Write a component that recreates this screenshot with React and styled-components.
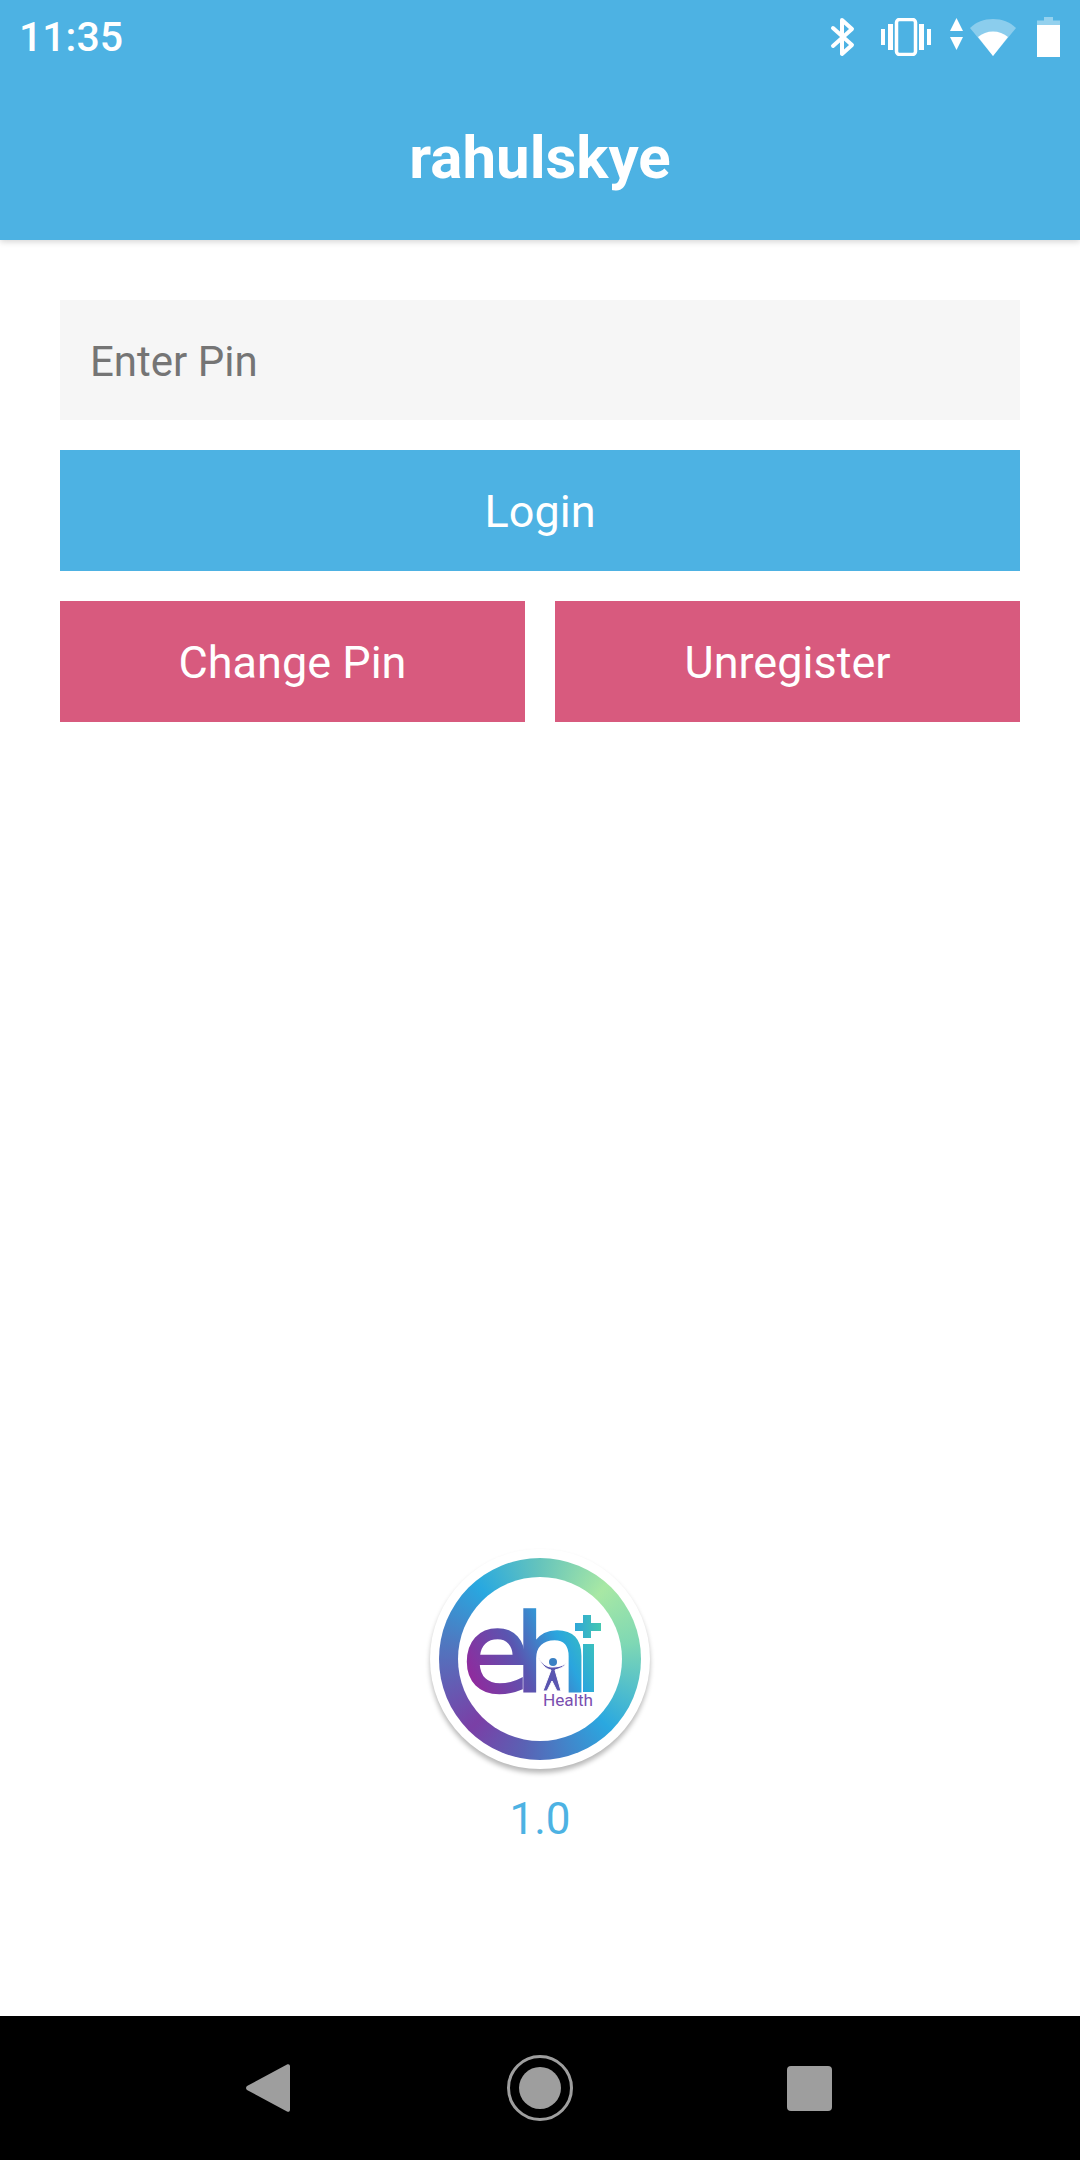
import React from 'react'
import styled, { createGlobalStyle } from 'styled-components'

const Global = createGlobalStyle`
  html, body { margin: 0; padding: 0; background: #fff; }
  * { box-sizing: border-box; }
  body { font-family: Roboto, "Liberation Sans", sans-serif; }
`

const Page = styled.div`
  width: 1080px;
  height: 2160px;
  display: flex;
  flex-direction: column;
  overflow: hidden;
`
const Header = styled.header`
  height: 240px;
  flex: none;
  background: #4db2e3;
  color: #fff;
  box-shadow: 0 2px 6px rgba(0, 0, 0, 0.16);
  display: flex;
  flex-direction: column;
`
const StatusBar = styled.div`
  height: 74px;
  padding: 0 20px 0 19px;
  display: flex;
  align-items: center;
  justify-content: space-between;
`
const Time = styled.span`
  font-size: 41px;
  font-weight: 500;
  line-height: 74px;
`
const StatusIcons = styled.div`
  display: flex;
  align-items: center;
`
const Title = styled.h1`
  margin: 0;
  flex: 1;
  display: flex;
  align-items: center;
  justify-content: center;
  font-size: 60px;
  font-weight: 700;
`
const Main = styled.main`
  flex: 1;
  padding: 60px 60px 0;
  display: flex;
  flex-direction: column;
  gap: 30px;
`
const PinInput = styled.input`
  height: 120px;
  width: 100%;
  border: 0;
  outline: 0;
  padding: 2px 30px 0;
  background: #f6f6f6;
  font: 400 42px Roboto, sans-serif;
  color: #333;
  &::placeholder { color: #757575; opacity: 1; }
`
const Button = styled.button`
  height: 121px;
  width: 100%;
  border: 0;
  padding: 2px 0 0;
  color: #fff;
  background: ${(p) => (p.$danger ? '#d85a7e' : '#4db2e3')};
  font: 400 45px Roboto, sans-serif;
`
const ButtonRow = styled.div`
  display: flex;
  gap: 30px;
`
const LogoBlock = styled.div`
  margin-top: auto;
  padding-bottom: 169px;
  display: flex;
  flex-direction: column;
  align-items: center;
`
const Disc = styled.div`
  width: 220px;
  height: 220px;
  border-radius: 50%;
  background: #fff;
  box-shadow: 0 4px 5px rgba(0, 0, 0, 0.28);
  display: flex;
  align-items: center;
  justify-content: center;
`
const Ring = styled.div`
  width: 202px;
  height: 202px;
  border-radius: 50%;
  background: conic-gradient(
    #66c4bc 0deg,
    #a8e8a4 42deg,
    #7fd8b4 80deg,
    #2aa8e0 135deg,
    #5a62b4 190deg,
    #7a3fa6 225deg,
    #4f78c0 280deg,
    #28a8e0 320deg,
    #66c4bc 360deg
  );
  display: flex;
  align-items: center;
  justify-content: center;
`
const RingHole = styled.div`
  width: 164px;
  height: 164px;
  border-radius: 50%;
  background: #fff;
  display: flex;
`
const Version = styled.div`
  margin-top: 22px;
  font-size: 44px;
  line-height: 56px;
  color: #4db2e3;
`
const NavBar = styled.nav`
  height: 144px;
  flex: none;
  background: #000;
  display: flex;
  align-items: center;
  justify-content: center;
  gap: 214px;
  padding-right: 3px;
  & > svg { margin-right: 3px; }
`
const HomeRing = styled.div`
  width: 66px;
  height: 66px;
  border-radius: 50%;
  border: 3px solid #9e9e9e;
  display: flex;
  align-items: center;
  justify-content: center;
`
const HomeDot = styled.div`
  width: 42px;
  height: 42px;
  border-radius: 50%;
  background: #9e9e9e;
`
const Recent = styled.div`
  width: 45px;
  height: 45px;
  border-radius: 4px;
  background: #9e9e9e;
`

const Bluetooth = () => (
  <svg width="26" height="40" viewBox="0 0 26 40" fill="none" stroke="#fff" strokeWidth="4" strokeLinejoin="round" strokeLinecap="round" style={{ marginRight: 25 }}>
    <path d="M3 11 22 28 12 37V3L22 12 3 29" />
  </svg>
)
const Vibrate = () => (
  <svg width="50" height="38" viewBox="0 0 50 38" fill="#fff" style={{ marginRight: 18 }}>
    <rect x="0" y="11" width="4" height="16" />
    <rect x="7" y="6" width="5" height="26" />
    <rect x="15.5" y="1.5" width="19" height="35" rx="3" fill="none" stroke="#fff" strokeWidth="3.5" />
    <rect x="38" y="6" width="5" height="26" />
    <rect x="46" y="11" width="4" height="16" />
  </svg>
)
const DataArrows = () => (
  <svg width="15" height="32" viewBox="0 0 15 32" fill="#fff" style={{ marginRight: 6, marginBottom: 6 }}>
    <path d="M7.5 0 14 13H1z" />
    <path d="M1 19h13L7.5 32z" />
  </svg>
)
const Wifi = () => (
  <svg width="46" height="37" viewBox="0 0 46 37" fill="#fff" style={{ marginRight: 21 }}>
    <path d="M0 9C6 3 14 0 23 0s17 3 23 9L23 37z" opacity="0.35" />
    <path d="M8 18c4-3.500 9.500-5.500 15-5.500s11 2 15 5.500L23 37z" />
  </svg>
)
const Battery = () => (
  <svg width="23" height="40" viewBox="0 0 23 40" fill="#fff">
    <path d="M7 0h9v3.500h7V8H0V3.500h7z" opacity="0.4" />
    <rect x="0" y="8" width="23" height="32" />
  </svg>
)
const BackArrow = () => (
  <svg width="44" height="48" viewBox="0 0 44 48" fill="#9e9e9e">
    <path d="M41 .6c1.500-1 3-.2 3 1.600v43.600c0 1.800-1.500 2.600-3 1.600L1 26c-1.300-1-1.300-3 0-4z" />
  </svg>
)

// logo art, coordinates follow the hole of the ring
const EhiLogo = () => (
  <svg width="164" height="164" viewBox="458 1582 164 164">
    <defs>
      <linearGradient id="ehiFill" gradientUnits="userSpaceOnUse" x1="475" y1="1700" x2="600" y2="1640">
        <stop offset="0" stopColor="#93289c" />
        <stop offset="0.4" stopColor="#5a55b0" />
        <stop offset="0.72" stopColor="#2aa5de" />
        <stop offset="1" stopColor="#3fc8b4" />
      </linearGradient>
      <linearGradient id="plusFill" gradientUnits="userSpaceOnUse" x1="575" y1="1630" x2="601" y2="1630">
        <stop offset="0" stopColor="#2fa6d8" />
        <stop offset="1" stopColor="#45c8b0" />
      </linearGradient>
    </defs>
    <text x="462" y="1696" fontFamily="DejaVu Sans, sans-serif" fontSize="110" fill="url(#ehiFill)" stroke="url(#ehiFill)" strokeWidth="2.5">e</text>
    <text x="513" y="1697" fontFamily="DejaVu Sans, sans-serif" fontSize="108" textLength="78" lengthAdjust="spacingAndGlyphs" fill="url(#ehiFill)" stroke="url(#ehiFill)" strokeWidth="1.5">h</text>
    <rect x="583" y="1649" width="11" height="48" fill="url(#ehiFill)" />
    <path d="M583 1620h8v8h10v8h-10v7h-8v-7h-8v-8h8z" fill="url(#plusFill)" />
    <path d="M538 1661C541 1670 546 1674 551 1675L543 1696h4L552 1686l5 10h4L555 1675C559 1674 564 1672 567 1668 562 1671 558 1672 552 1672 546 1672 541 1668 538 1661z" fill="#5a55b0" stroke="#fff" strokeWidth="1" />
    <circle cx="553" cy="1667" r="4" fill="#3a80c4" />
    <text x="543" y="1711" fontFamily="Roboto, sans-serif" fontSize="16" textLength="50" lengthAdjust="spacingAndGlyphs" fill="#7a4fb0">Health</text>
  </svg>
)

const App = () => {
  return (
    <Page>
      <Global />
      <Header>
        <StatusBar>
          <Time>11:35</Time>
          <StatusIcons>
            <Bluetooth />
            <Vibrate />
            <DataArrows />
            <Wifi />
            <Battery />
          </StatusIcons>
        </StatusBar>
        <Title>rahulskye</Title>
      </Header>
      <Main>
        <PinInput placeholder="Enter Pin" type="password" />
        <Button>Login</Button>
        <ButtonRow>
          <Button $danger>Change Pin</Button>
          <Button $danger>Unregister</Button>
        </ButtonRow>
        <LogoBlock>
          <Disc>
            <Ring>
              <RingHole>
                <EhiLogo />
              </RingHole>
            </Ring>
          </Disc>
          <Version>1.0</Version>
        </LogoBlock>
      </Main>
      <NavBar>
        <BackArrow />
        <HomeRing>
          <HomeDot />
        </HomeRing>
        <Recent />
      </NavBar>
    </Page>
  )
}

export default App
